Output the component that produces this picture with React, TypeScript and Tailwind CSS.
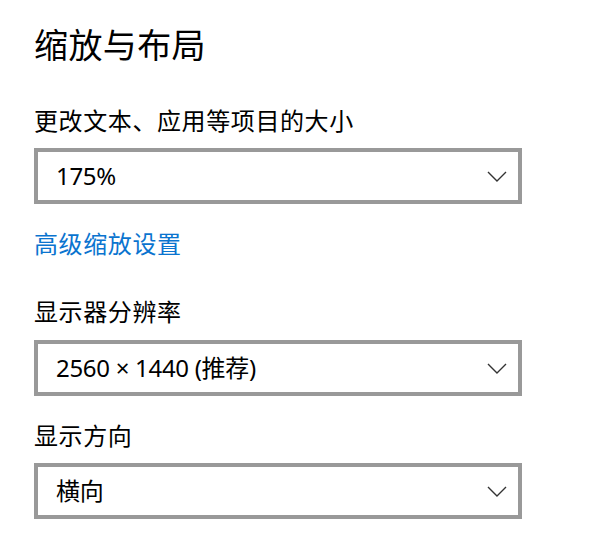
import { ReactNode } from "react";

const font = {
  fontFamily: '"Noto Sans", "Noto Sans CJK SC", sans-serif',
};

function Chevron() {
  return (
    <svg width="20" height="11" viewBox="0 0 20 11" fill="none" className="shrink-0">
      <path d="M1 1 L10 10 L19 1" stroke="#333333" strokeWidth="1.4" />
    </svg>
  );
}

function ComboBox({ children }: { children: ReactNode }) {
  return (
    <div className="flex h-[56px] w-[488px] items-center justify-between border-4 border-[#999999] bg-white pl-[18px] pr-[11px]">
      <span className="text-[24px] leading-[24px] tracking-[-0.3px] text-black">{children}</span>
      <Chevron />
    </div>
  );
}

export default function App() {
  return (
    <div className="min-h-[550px] w-[616px] bg-white pl-[34px] pt-[28px]" style={font}>
      <h1 className="text-[34px] font-normal leading-[34px] tracking-[0.4px] text-black">缩放与布局</h1>

      <div className="mt-[47px] text-[24px] leading-[24px] tracking-[0.6px] text-black">
        更改文本、应用等项目的大小
      </div>
      <div className="mt-[15px]">
        <ComboBox>175%</ComboBox>
      </div>

      <a className="mt-[28px] block w-fit text-[24px] leading-[24px] tracking-[0.6px] text-[#0a74cf]">
        高级缩放设置
      </a>

      <div className="mt-[44px] text-[24px] leading-[24px] tracking-[0.6px] text-black">显示器分辨率</div>
      <div className="mt-[16px]">
        <ComboBox>2560 × 1440 (推荐)</ComboBox>
      </div>

      <div className="mt-[28px] text-[24px] leading-[24px] tracking-[0.6px] text-black">显示方向</div>
      <div className="mt-[15px]">
        <ComboBox>横向</ComboBox>
      </div>
    </div>
  );
}
